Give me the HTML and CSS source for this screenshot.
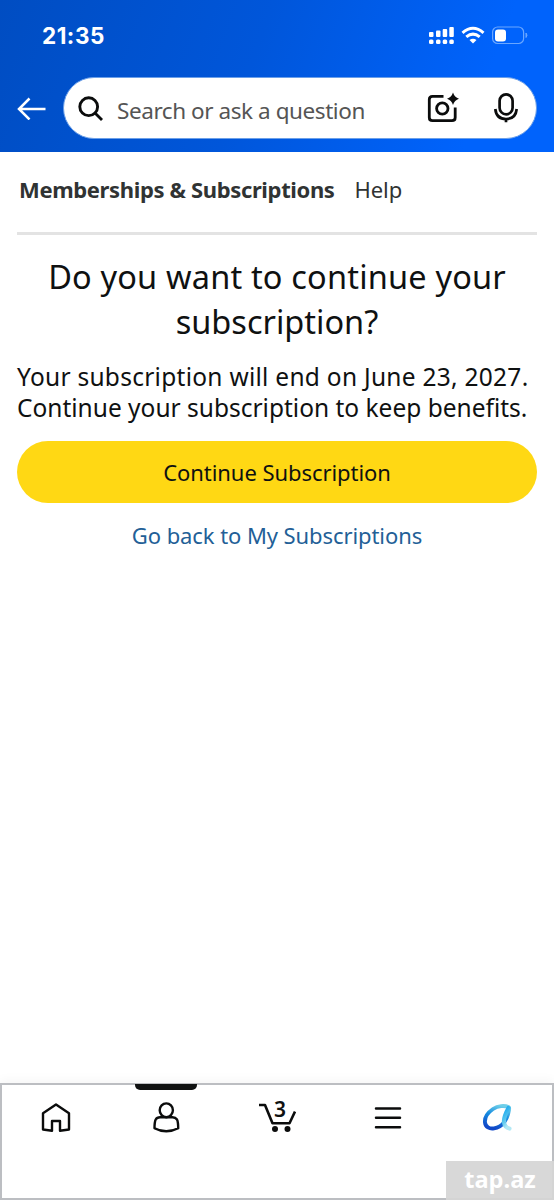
FILE: index.html
```html
<!DOCTYPE html>
<html lang="en">
<head>
<meta charset="utf-8">
<title>Memberships &amp; Subscriptions</title>
<link rel="stylesheet" href="styles.css">
</head>
<body>
<div class="screen">
  <header class="top">
    <div class="status">
      <span class="clock">21:35</span>
      <svg class="status-icons" width="102" height="24" viewBox="0 0 102 24">
        <g fill="#fff">
          <rect x="1" y="9" width="4.5" height="5" rx="1"/><rect x="8" y="7.500" width="4.500" height="6.500" rx="1"/><rect x="14.700" y="6" width="4.500" height="8" rx="1"/><rect x="21.300" y="4" width="4.500" height="10" rx="1"/>
          <rect x="1" y="16.500" width="4.500" height="4.500" rx="1.500"/><rect x="8" y="16.500" width="4.500" height="4.500" rx="1.500"/><rect x="14.700" y="16.500" width="4.500" height="4.500" rx="1.500"/><rect x="21.300" y="16.500" width="4.500" height="4.500" rx="1.500"/>
          <path d="M45 20.500l-3.500-3.400q3.500-2.600 7 0z"/>
          <rect x="67" y="6.500" width="11" height="12" rx="3"/>
        </g>
        <path d="M34.500 9.800Q45 0.800 55.500 9.800M38.300 13.900Q45 8.300 51.700 13.900" fill="none" stroke="#fff" stroke-width="3"/>
        <rect x="64.600" y="4" width="31" height="16.500" rx="5" fill="none" stroke="#6aa7ff" stroke-width="1.200"/>
        <path d="M98 10q2 2.200 0 4.500z" fill="#6aa7ff" stroke="#6aa7ff"/>
      </svg>
    </div>
    <div class="search-row">
      <svg class="back" width="30" height="24" viewBox="0 0 30 24" fill="none" stroke="#fff" stroke-width="2.500"><path d="M28.500 13H2.500M12.500 2.500L2 13L12.500 23.500"/></svg>
      <div class="search">
        <svg width="28" height="28" viewBox="0 0 28 28" fill="none" stroke="#0b0c0c" stroke-width="2.900"><circle cx="10.700" cy="12.700" r="8.900"/><path d="M17 19L24 26"/></svg>
        <span class="placeholder">Search or ask a question</span>
        <svg class="camera" width="32" height="32" viewBox="0 0 32 32" fill="none" stroke="#0b0c0c" stroke-width="2.800"><path d="M16.500 4.300H5.500Q2.300 4.300 2.300 7.500V25.500Q2.300 28.700 5.500 28.700H25Q28.200 28.700 28.200 25.500V15.500"/><circle cx="15.300" cy="16.500" r="5.700"/><path d="M26 0.500Q27.500 5.300 32 6.800Q27.500 8.300 26 13.100Q24.500 8.300 20 6.800Q24.500 5.300 26 0.500Z" fill="#0b0c0c" stroke="none"/></svg>
        <svg class="mic" width="26" height="32" viewBox="0 0 26 32" fill="none" stroke="#0b0c0c" stroke-width="2.700"><rect x="6.600" y="2.300" width="13" height="20" rx="6.500"/><path d="M2.300 17Q3.300 27 13 27Q22.700 27 23.700 17M13 27V30.300"/></svg>
      </div>
    </div>
  </header>
  <nav class="tabs"><span class="tab current">Memberships &amp; Subscriptions</span><span class="tab help">Help</span></nav>
  <main class="content">
    <h1><span class="h-one">Do you want to continue your</span><br><span class="h-two">subscription?</span></h1>
    <p><span class="p-one">Your subscription will end on June 23, 2027.</span><br><span class="p-two">Continue your subscription to keep benefits.</span></p>
    <div class="button"><span>Continue Subscription</span></div>
    <a class="link">Go back to My Subscriptions</a>
  </main>
  <footer class="bottom">
    <div class="item"><svg width="32" height="32" viewBox="0 0 32 32" fill="none" stroke="#0b0c0c" stroke-width="2.400" stroke-linejoin="round"><path d="M15 3.500L2 12.200V28.500L11 29.800V20H19V29.800L28 28.500V12.200Z"/></svg></div>
    <div class="item active"><svg width="32" height="32" viewBox="0 0 32 32" fill="none" stroke="#0b0c0c" stroke-width="2.400" stroke-linejoin="round"><ellipse cx="15.300" cy="9.300" rx="6.600" ry="6.900"/><path d="M9 16.300H21.500Q24.500 16.300 26 18.500Q27.200 21 27.200 27.300Q21.500 30.300 15.300 30.300Q9 30.300 3.500 27.300Q3.500 21 4.700 18.500Q6 16.300 9 16.300Z"/></svg></div>
    <div class="item"><svg width="38" height="34" viewBox="0 0 38 34" fill="none" stroke="#0b0c0c" stroke-width="2.600"><path d="M1 5H7L14.500 23.200H31.500L37 11.500" stroke-linejoin="round"/><circle cx="17" cy="29" r="3" fill="#0b0c0c" stroke="none"/><circle cx="29.500" cy="29" r="3" fill="#0b0c0c" stroke="none"/></svg><span class="count">3</span></div>
    <div class="item"><svg width="32" height="32" viewBox="0 0 32 32" stroke="#0b0c0c" stroke-width="2.500" stroke-linecap="round"><path d="M5 7.500H29M5 16.800H29M5 26.200H29"/></svg></div>
    <div class="item"><svg width="32" height="32" viewBox="0 0 32 32" fill="none" stroke-linecap="round">
      <defs><linearGradient id="ring" x1="0.700" y1="0" x2="0.400" y2="1"><stop offset="0" stop-color="#6fcfe9"/><stop offset="0.450" stop-color="#168ce0"/><stop offset="1" stop-color="#1148c8"/></linearGradient><linearGradient id="tail" x1="0" y1="0" x2="0.300" y2="1"><stop offset="0" stop-color="#16a5ef"/><stop offset="0.600" stop-color="#5cc8ee"/><stop offset="1" stop-color="#b3e9f5"/></linearGradient></defs>
      <path d="M27.500 6C23.500 4.300 17 4.600 12 8C6.500 11.800 3.500 17 4 21.500C4.500 26 8.500 28.200 13 27.400C21.500 26 26.500 18.500 28 9Q28.500 6.500 27.500 6Z" stroke="url(#ring)" stroke-width="3.900"/>
      <path d="M27.500 7C25 11.500 22.500 17 23 21.500Q23.800 26.500 28.500 27.500" stroke="url(#tail)" stroke-width="4.200"/></svg></div>
    <div class="watermark">tap.az</div>
  </footer>
</div>
</body>
</html>
```
FILE: styles.css
```css
* { box-sizing: border-box; }
body { margin: 0; background: #fff; font-family: "Noto Sans", sans-serif; color: #0f1111; }
.screen { width: 554px; height: 1200px; display: flex; flex-direction: column; overflow: hidden; }
svg { display: block; flex: none; }
span { white-space: nowrap; }
.top { height: 152px; flex: none; background: linear-gradient(110deg, #004dc2 0%, #0056da 45%, #0063fc 85%, #0063fc 100%); }
.status { height: 77px; padding: 23px 24px 0 42px; display: flex; justify-content: space-between; align-items: flex-start; }
.clock { font: 700 22.5px/25px Inter, sans-serif; color: #fff; letter-spacing: 0.5px; }
.search-row { display: flex; align-items: center; padding: 0 17px; gap: 16px; height: 62px; }
.search { width: 474px; height: 62px; flex: none; border: 1px solid #6b9fe8; border-radius: 31px; background: #fff; display: flex; align-items: center; padding: 0 17px 0 14px; }
.placeholder { margin-left: 11px; padding-top: 4px; font-size: 22.5px; color: #555; letter-spacing: -0.43px; flex: 1; }
.camera { margin-right: 34px; }
.tabs { height: 83px; margin: 0 17px; border-bottom: 3px solid #e3e3e3; display: flex; gap: 20px; padding: 20px 2px 0; font-size: 22px; line-height: 35px; color: #303333; }
.current { font-weight: 700; letter-spacing: -0.36px; }
.help { letter-spacing: -0.1px; }
.content { flex: 1; padding: 19px 17px 0; display: flex; flex-direction: column; }
h1 { margin: 0; font-size: 32.5px; line-height: 45px; font-weight: 400; text-align: center; }
.h-one { letter-spacing: 0.18px; }
.h-two { letter-spacing: 0; }
p { margin: 17px 0 0; font-size: 24.5px; line-height: 31px; }
.p-one { letter-spacing: 0.27px; }
.p-two { letter-spacing: 0; }
.button { height: 62px; margin-top: 18px; flex: none; border-radius: 31px; background: #ffd814; display: flex; justify-content: center; align-items: center; font-size: 22px; letter-spacing: -0.06px; }
.link { margin-top: 15px; line-height: 34px; text-align: center; color: #235f97; font-size: 22px; letter-spacing: -0.08px; }
.bottom { position: relative; height: 117px; flex: none; border: 2px solid #bcbec2; display: flex; padding-top: 15px; box-shadow: 0 -3px 10px #0000000a; }
.item { flex: 1; height: 34px; display: flex; justify-content: center; align-items: center; position: relative; }
.active::before { content: ""; position: absolute; top: -16px; left: 23px; width: 62px; height: 6px; background: #0f1111; border-radius: 0 0 5px 5px; }
.count { position: absolute; left: 52px; top: -3px; font-size: 21px; line-height: 24px; font-weight: 600; }
.watermark { position: absolute; right: -2px; bottom: -2px; width: 108px; height: 39px; background: #d5d5d5ee; color: #fff; font: 700 23.5px/37px "Open Sans", sans-serif; text-align: center; }
```
